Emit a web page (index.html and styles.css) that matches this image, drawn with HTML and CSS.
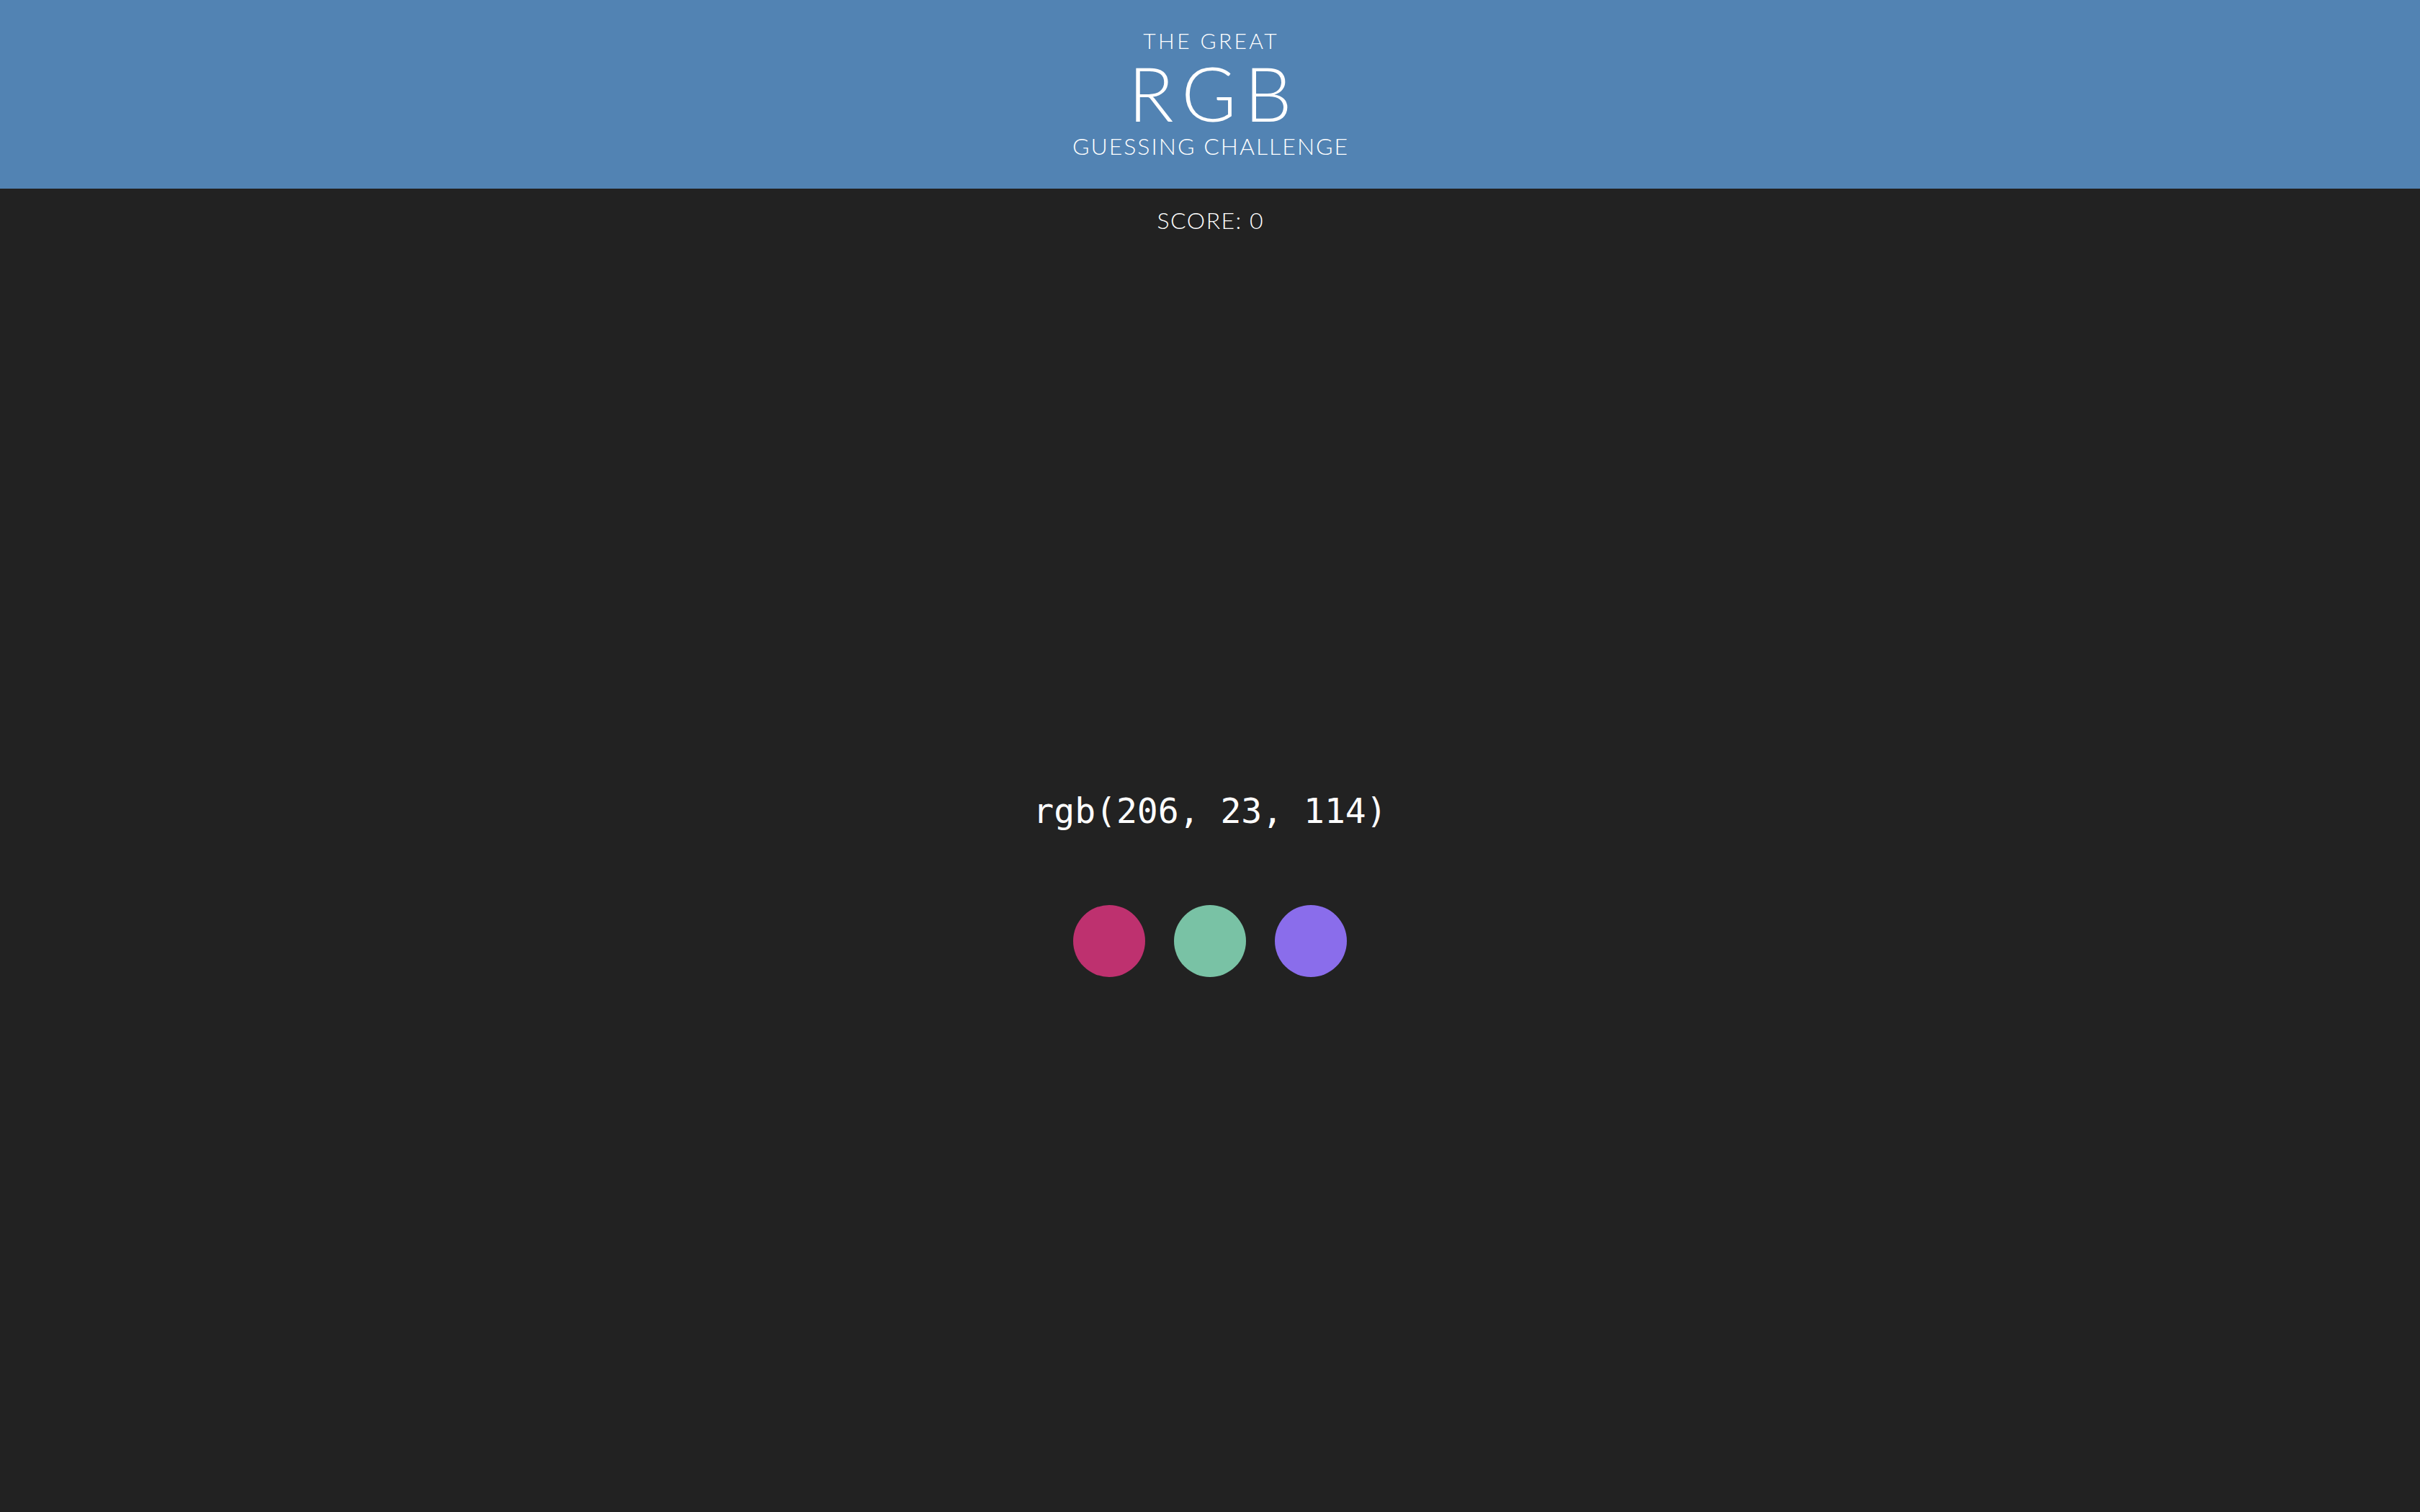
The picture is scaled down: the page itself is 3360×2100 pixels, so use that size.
FILE: index.html
```html
<!DOCTYPE html>
<html lang="en">
<head>
<meta charset="utf-8">
<title>The Great RGB Guessing Challenge</title>
<link rel="stylesheet" href="styles.css">
</head>
<body>
<header class="banner">
  <div class="pre">THE GREAT</div>
  <h1 class="title">RGB</h1>
  <div class="sub">GUESSING CHALLENGE</div>
</header>
<main class="game">
  <div class="score">SCORE: 0</div>
  <section class="play">
    <div class="target">rgb(206, 23, 114)</div>
    <div class="options">
      <div class="dot dot-a"></div>
      <div class="dot dot-b"></div>
      <div class="dot dot-c"></div>
    </div>
  </section>
</main>
</body>
</html>
```

FILE: styles.css
```css
html, body {
  margin: 0;
  padding: 0;
  height: 100%;
}
body {
  background: #222222;
  color: #ffffff;
  font-family: "Lato", "Open Sans", sans-serif;
  font-weight: 300;
}
.banner {
  height: 262px;
  box-sizing: border-box;
  background: #5283b3;
  display: flex;
  flex-direction: column;
  align-items: center;
  padding-top: 38px;
}
.pre {
  font-size: 30px;
  line-height: 36px;
  letter-spacing: 3.4px;
  padding-left: 3.4px;
}
.title {
  margin: 0;
  font-weight: 300;
  font-size: 104px;
  line-height: 110px;
  letter-spacing: 11px;
  padding-left: 11px;
}
.sub {
  font-size: 32px;
  line-height: 38px;
  letter-spacing: 2px;
  padding-left: 2px;
}
.game {
  display: flex;
  flex-direction: column;
  align-items: center;
}
.score {
  margin-top: 24px;
  font-size: 32px;
  line-height: 40px;
  letter-spacing: 1.5px;
  padding-left: 1.5px;
}
.play {
  margin-top: 772px;
  display: flex;
  flex-direction: column;
  align-items: center;
}
.target {
  font-family: "DejaVu Sans Mono", "Liberation Mono", monospace;
  font-weight: 400;
  font-size: 48px;
  line-height: 56px;
}
.options {
  margin-top: 103px;
  display: flex;
  gap: 40px;
}
.dot {
  width: 100px;
  height: 100px;
  border-radius: 50%;
}
.dot-a { background: #be316f; }
.dot-b { background: #79c2a5; }
.dot-c { background: #8a6deb; }
```
